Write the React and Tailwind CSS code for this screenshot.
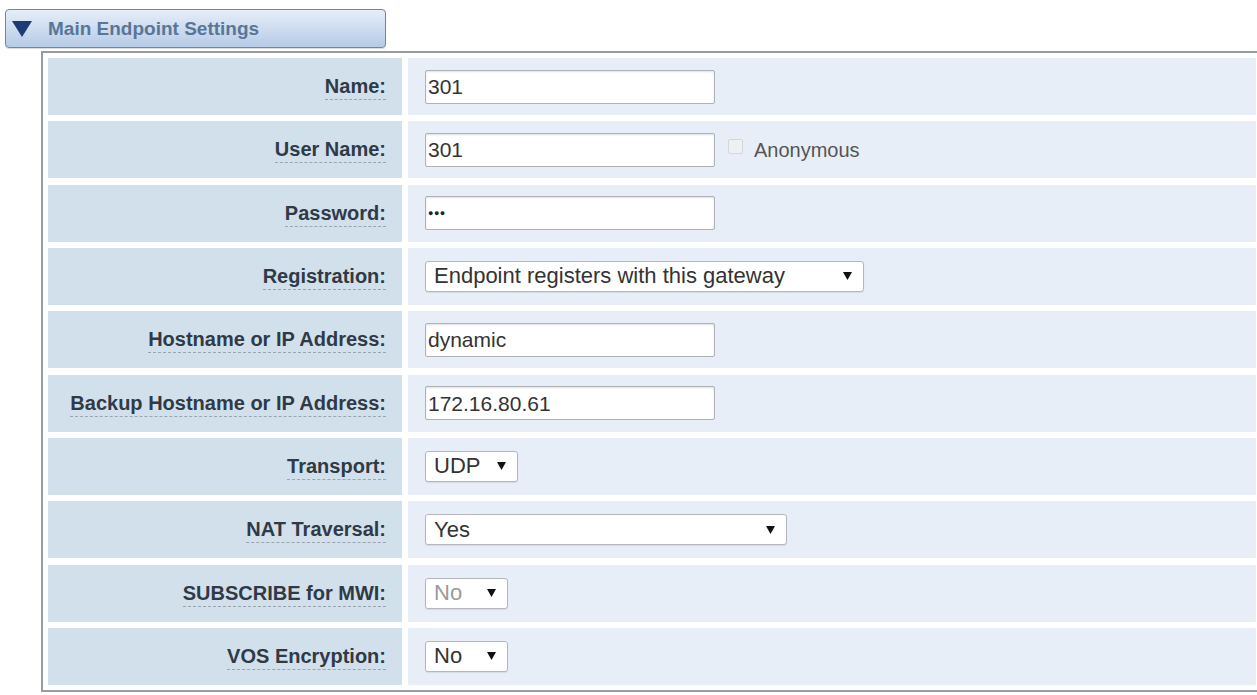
import React from "react";

const Arrow = () => (
  <svg width="9" height="8" viewBox="0 0 9 8" className="shrink-0">
    <polygon points="0,0 9,0 4.5,8" fill="#111" />
  </svg>
);

function TextBox({ value, dots }) {
  return (
    <div className="w-[290px] h-[34px] bg-white border border-[#aeb2b6] rounded-[2px] shadow-[inset_0_1px_2px_rgba(0,0,0,0.12)] flex items-center pl-[2px] text-[21px] text-[#333] leading-none">
      {dots ? <span className="text-[9px] tracking-[0.5px] text-[#222]">●●●</span> : value}
    </div>
  );
}

function Select({ value, w, disabled }) {
  return (
    <div
      className={`h-[31px] bg-white border border-[#b4b8bc] rounded-[3px] shadow-[0_1px_1px_rgba(0,0,0,0.08)] flex items-center justify-between pl-[8px] pr-[11px] text-[22px] leading-none ${
        disabled ? "text-[#9a9a9a]" : "text-[#333]"
      }`}
      style={{ width: w }}
    >
      <span>{value}</span>
      <Arrow />
    </div>
  );
}

const rows = [
  { label: "Name:", el: <TextBox value="301" /> },
  {
    label: "User Name:",
    el: (
      <div className="flex items-center">
        <TextBox value="301" />
        <div className="ml-[13px] -mt-[6px] w-[15px] h-[15px] border border-[#d3d7db] rounded-[2px] bg-[#eef1f4]" />
        <span className="ml-[11px] text-[20px] text-[#555] leading-none">Anonymous</span>
      </div>
    ),
  },
  { label: "Password:", el: <TextBox dots /> },
  { label: "Registration:", el: <Select value="Endpoint registers with this gateway" w={439} /> },
  { label: "Hostname or IP Address:", el: <TextBox value="dynamic" /> },
  { label: "Backup Hostname or IP Address:", el: <TextBox value="172.16.80.61" /> },
  { label: "Transport:", el: <Select value="UDP" w={93} /> },
  { label: "NAT Traversal:", el: <Select value="Yes" w={362} /> },
  { label: "SUBSCRIBE for MWI:", el: <Select value="No" w={83} disabled /> },
  { label: "VOS Encryption:", el: <Select value="No" w={83} /> },
];

export default function App() {
  return (
    <div className="w-[1257px] h-[695px] bg-white overflow-hidden font-['Liberation_Sans',Arial,sans-serif]">
      <div className="pt-[9px] pl-[5px]">
        <div className="w-[381px] h-[39px] rounded-[4px] border border-[#7186a2] bg-gradient-to-b from-[#e6eef9] to-[#b6cbe6] shadow-[0_1px_1px_rgba(0,0,0,0.15)] flex items-center pl-[6px]">
          <svg width="20" height="16" viewBox="0 0 20 16">
            <polygon points="0,0 20,0 10,16" fill="#1d3a72" />
          </svg>
          <span className="ml-[16px] text-[19px] font-bold text-[#5a7697] leading-none">Main Endpoint Settings</span>
        </div>
      </div>
      <div className="ml-[41px] mt-[3px] w-[1222px] border-2 border-[#949ca4] bg-white p-[5px] grid grid-cols-[354px_1fr] gap-x-[6px] gap-y-[6.33px]">
        {rows.map((r) => (
          <React.Fragment key={r.label}>
            <div className="h-[57px] bg-[#d2e0ec] flex items-center justify-end pr-[16px]">
              <span className="text-[20px] font-bold text-[#2f3a46] leading-[22px] border-b border-dashed border-[#9aa5b0] pb-[2px] mt-[2px]">
                {r.label}
              </span>
            </div>
            <div className="h-[57px] bg-[#e7eef8] flex items-center pl-[17px]">{r.el}</div>
          </React.Fragment>
        ))}
      </div>
    </div>
  );
}
